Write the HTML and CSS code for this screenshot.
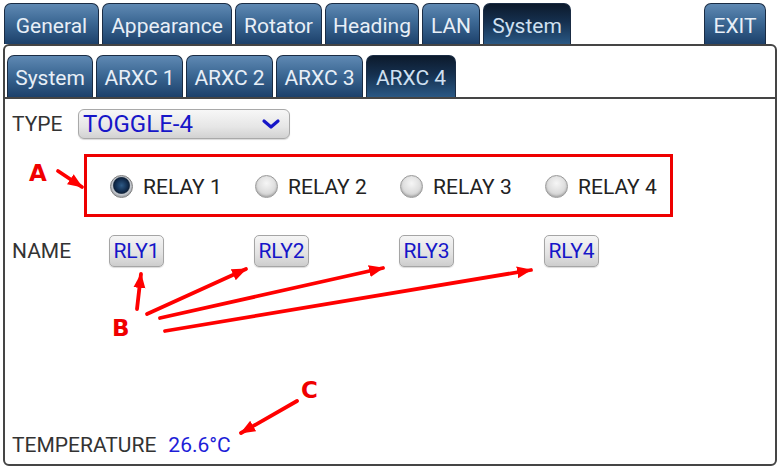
FILE: index.html
```html
<!DOCTYPE html>
<html>
<head>
<meta charset="utf-8">
<link rel="stylesheet" href="styles.css">
</head>
<body>
<div class="screen">
  <div class="topbar">
    <div class="tab w-general">General</div>
    <div class="tab w-appearance">Appearance</div>
    <div class="tab w-rotator">Rotator</div>
    <div class="tab w-heading">Heading</div>
    <div class="tab w-lan">LAN</div>
    <div class="tab w-system active">System</div>
    <div class="tab exit">EXIT</div>
  </div>
  <div class="panel">
    <div class="subbar">
      <div class="tab sub">System</div>
      <div class="tab sub">ARXC 1</div>
      <div class="tab sub">ARXC 2</div>
      <div class="tab sub">ARXC 3</div>
      <div class="tab sub active">ARXC 4</div>
    </div>
    <div class="content">
      <div class="row type-row">
        <span class="label">TYPE</span>
        <div class="select">
          <span class="select-text">TOGGLE-4</span>
          <svg class="chev" width="20" height="12" viewBox="0 0 20 12"><path d="M3 3 L10 9 L17 3" fill="none" stroke="#1616c8" stroke-width="3.2" stroke-linecap="round" stroke-linejoin="round"/></svg>
        </div>
      </div>
      <div class="relaybox">
        <div class="relay"><span class="radio checked"></span><span class="rlabel">RELAY 1</span></div>
        <div class="relay"><span class="radio"></span><span class="rlabel">RELAY 2</span></div>
        <div class="relay"><span class="radio"></span><span class="rlabel">RELAY 3</span></div>
        <div class="relay"><span class="radio"></span><span class="rlabel">RELAY 4</span></div>
      </div>
      <div class="row name-row">
        <span class="label name-label">NAME</span>
        <div class="cell"><span class="btn">RLY1</span></div>
        <div class="cell"><span class="btn">RLY2</span></div>
        <div class="cell"><span class="btn">RLY3</span></div>
        <div class="cell"><span class="btn">RLY4</span></div>
      </div>
      <div class="row temp-row">
        <span class="label">TEMPERATURE</span>
        <span class="value">26.6°C</span>
      </div>
    </div>
  </div>
  <svg class="annot" width="781" height="469" viewBox="0 0 781 469">
    <defs>
      <marker id="ah" markerUnits="userSpaceOnUse" markerWidth="16" markerHeight="14" refX="14" refY="7" orient="auto">
        <path d="M0 1 L15 7 L0 13 Z" fill="#f00"/>
      </marker>
    </defs>
    <g stroke="#f00" stroke-width="3.8" stroke-linecap="round" fill="none" marker-end="url(#ah)">
      <line x1="58" y1="171" x2="82" y2="187"/>
      <line x1="137" y1="309" x2="141" y2="274"/>
      <line x1="147" y1="314" x2="246" y2="269"/>
      <line x1="160" y1="318" x2="383" y2="268"/>
      <line x1="165" y1="331" x2="531" y2="270"/>
      <line x1="297" y1="401" x2="241" y2="433"/>
    </g>
  </svg>
  <span class="mark mark-a">A</span>
  <span class="mark mark-b">B</span>
  <span class="mark mark-c">C</span>
</div>
</body>
</html>
```
FILE: styles.css
```css
html, body {
  margin: 0;
  padding: 0;
  background: #ffffff;
}
body {
  font-family: Roboto, "Noto Sans", "Liberation Sans", sans-serif;
  width: 781px;
  height: 469px;
  overflow: hidden;
}
.screen {
  position: relative;
  width: 781px;
  height: 469px;
}
.topbar {
  display: flex;
  gap: 3px;
  padding: 3px 0 0 4px;
  height: 41px;
}
.tab {
  box-sizing: border-box;
  height: 41px;
  padding: 3px 0 0;
  display: flex;
  align-items: center;
  justify-content: center;
  font-size: 21px;
  color: #e8eff7;
  background: linear-gradient(to bottom, #5f89b3 0%, #3c6894 45%, #1d416b 100%);
  border: 1px solid #1a2c44;
  border-bottom: none;
  border-radius: 7px 7px 0 0;
  white-space: nowrap;
}
.w-general { width: 95px; }
.w-appearance { width: 130px; }
.w-rotator { width: 87px; }
.w-heading { width: 94px; }
.w-lan { width: 58px; }
.w-system { width: 88px; }
.tab.active {
  background: linear-gradient(to bottom, #0c1a2c 0%, #15304f 45%, #2a5884 100%);
  color: #cfe0f1;
}
.tab.exit {
  margin-left: auto;
  margin-right: 15px;
  width: 62px;
}
.panel {
  box-sizing: border-box;
  margin-left: 3px;
  width: 774px;
  height: 422px;
  border: 2px solid #454545;
  border-radius: 6px;
  display: flex;
  flex-direction: column;
}
.subbar {
  display: flex;
  gap: 3px;
  padding: 9px 0 0 2px;
  height: 42px;
}
.tab.sub {
  height: 42px;
  width: 87px;
}
.tab.sub:first-child {
  width: 86px;
}
.tab.sub.active {
  width: 90px;
}
.content {
  flex: 1;
  border-top: 2px solid #454545;
  display: flex;
  flex-direction: column;
  padding: 0 0 0 7px;
}
.row {
  display: flex;
  align-items: center;
}
.label {
  font-size: 21px;
  color: #333333;
}
.type-row {
  margin-top: 9px;
  height: 32px;
}
.type-row .label {
  width: 66px;
}
.select {
  box-sizing: border-box;
  width: 212px;
  height: 30px;
  border: 1px solid #a9a9a9;
  border-radius: 6px;
  background: linear-gradient(to bottom, #f7f7f7 0%, #e6e6e6 60%, #d2d2d2 100%);
  display: flex;
  align-items: center;
  justify-content: space-between;
  padding: 0 8px 0 4px;
  box-shadow: 0 1px 1px rgba(0,0,0,0.15);
}
.select-text {
  font-size: 24px;
  line-height: 1;
  color: #1616c8;
}
.relaybox {
  box-sizing: border-box;
  margin-top: 14px;
  margin-left: 72px;
  width: 589px;
  height: 63px;
  border: 3px solid #ee0000;
  display: grid;
  grid-template-columns: 145px 145px 145px 145px;
  align-items: center;
  padding-left: 23px;
  padding-top: 2px;
}
.relay {
  display: flex;
  align-items: center;
  gap: 10px;
}
.radio {
  box-sizing: border-box;
  width: 23px;
  height: 23px;
  border-radius: 50%;
  border: 1px solid #9a9a9a;
  background: radial-gradient(circle at 50% 35%, #f6f6f6 0%, #dcdcdc 55%, #b8b8b8 100%);
  box-shadow: inset 0 -1px 2px rgba(0,0,0,0.2);
}
.radio.checked {
  border: 1px solid #7c7c7c;
  background: radial-gradient(circle at 50% 45%, #2e5a86 0%, #10294a 42%, #0e2138 50%, #c8ccd2 58%, #a9aeb5 100%);
}
.rlabel {
  font-size: 21px;
  color: #222222;
}
.name-row {
  margin-top: 17px;
  height: 34px;
}
.name-label {
  width: 97px;
}
.cell {
  width: 145px;
}
.btn {
  box-sizing: border-box;
  display: inline-flex;
  align-items: center;
  justify-content: center;
  width: 55px;
  height: 32px;
  border: 1px solid #a5a5a5;
  border-radius: 5px;
  background: linear-gradient(to bottom, #f5f5f5 0%, #e2e2e2 60%, #cdcdcd 100%);
  font-size: 21px;
  color: #1616c8;
  box-shadow: 0 1px 1px rgba(0,0,0,0.15);
  white-space: nowrap;
}
.temp-row {
  margin-top: auto;
  margin-bottom: 7px;
  gap: 12px;
}
.value {
  font-size: 21px;
  color: #1e1ed8;
}
.annot {
  position: absolute;
  left: 0;
  top: 0;
  pointer-events: none;
}
.mark {
  position: absolute;
  font-family: "DejaVu Sans", sans-serif;
  font-weight: bold;
  font-size: 23px;
  line-height: 1;
  color: #f00000;
}
.mark-a { left: 29px; top: 162px; }
.mark-b { left: 112px; top: 317px; }
.mark-c { left: 301px; top: 379px; }
```
